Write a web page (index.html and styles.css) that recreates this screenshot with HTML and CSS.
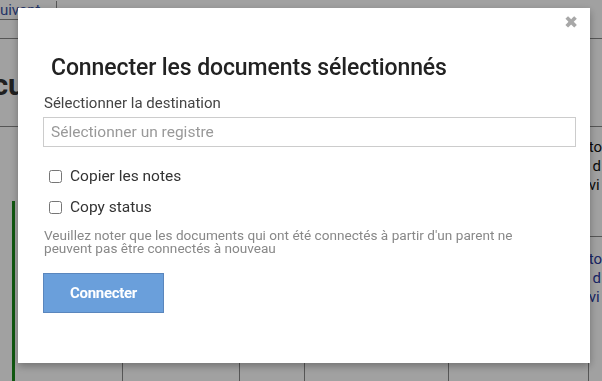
FILE: index.html
```html
<!DOCTYPE html>
<html lang="fr">
<head>
  <meta charset="UTF-8" />
  <title>Connecter les documents</title>
  <link rel="stylesheet" href="styles.css">
</head>
<body>
  <!-- page behind the modal -->
  <div class="page">
    <div class="toolbar">
      <button class="btn-next">Suivant</button>
    </div>
    <h1 class="page-title">Documents</h1>
    <div class="grid">
      <div class="col c1"></div>
      <div class="col c2"></div>
      <div class="col c3"></div>
      <div class="col c4"></div>
      <div class="col c5"></div>
      <div class="col c6">
        <div class="cell-text">to<br>&nbsp;d<br>vi</div>
        <div class="cell-text link">to<br>&nbsp;d<br>vi</div>
      </div>
    </div>
  </div>

  <!-- Modal -->
  <div class="overlay">
    <div class="modal">
      <span class="close">&#10006;</span>
      <h2 class="modal-title">Connecter les documents sélectionnés</h2>
      <label class="field-label">Sélectionner la destination</label>
      <input class="field-input" type="text" placeholder="Sélectionner un registre">
      <div class="options">
        <label class="check"><input type="checkbox"> Copier les notes</label>
        <label class="check"><input type="checkbox"> Copy status</label>
      </div>
      <p class="note">Veuillez noter que les documents qui ont été connectés à partir d'un parent ne peuvent pas être connectés à nouveau</p>
      <button class="btn-connect">Connecter</button>
    </div>
  </div>
</body>
</html>
```

FILE: styles.css
```css
body {
  margin: 0;
  font-family: Roboto, 'Liberation Sans', sans-serif;
  background: #fff;
  overflow: hidden;
  height: 381px;
}

/* Background page */
.page {
  height: 381px;
}

.toolbar {
  height: 38px;
  border-bottom: 1px solid #888;
}

.btn-next {
  margin: 0 0 0 -26px;
  height: 19px;
  padding: 0 16px;
  font-family: Roboto, sans-serif;
  font-size: 15px;
  color: #3a55a5;
  background: #fff;
  border: 1px solid #888;
  border-top: none;
  line-height: 16px;
}

.page-title {
  margin: 0 0 0 -44px;
  height: 88px;
  box-sizing: border-box;
  padding-top: 28px;
  font-size: 30px;
  font-weight: 700;
  color: #333;
  border-bottom: 1px solid #888;
}

.grid {
  display: flex;
  height: 260px;
}

.col {
  border-right: 1px solid #888;
}

.c1 { width: 122px; position: relative; }
.c1::before {
  content: "";
  position: absolute;
  left: 12px;
  top: 74px;
  bottom: 0;
  width: 3px;
  background: #1a8a1a;
}
.c2 { width: 117px; }
.c3 { width: 64px; }
.c4 { width: 144px; }
.c5 { width: 139px; }
.c6 { flex: 1; border-right: none; }

.cell-text {
  font-size: 15px;
  line-height: 19px;
  color: #111;
  padding-top: 11px;
  height: 110px;
  box-sizing: border-box;
  border-bottom: 1px solid #888;
}

.cell-text.link {
  color: #2a3aa0;
  border-bottom: none;
  padding-top: 13px;
}

/* Modal */
.overlay {
  position: fixed;
  inset: 0;
  background: rgba(0, 0, 0, 0.37);
}

.modal {
  position: absolute;
  left: 18px;
  top: 8px;
  width: 572px;
  height: 355px;
  box-sizing: border-box;
  background: #fff;
  padding: 45px 13px 0 26px;
  box-shadow: 0 3px 8px rgba(0, 0, 0, 0.3);
}

.close {
  position: absolute;
  right: 12px;
  top: 4px;
  font-size: 17px;
  color: #a8a8a8;
}

.modal-title {
  margin: 0 0 11px 7px;
  font-size: 23px;
  font-weight: 500;
  color: #222;
  line-height: 30px;
  letter-spacing: -0.1px;
}

.field-label {
  display: block;
  font-size: 15px;
  color: #444;
  line-height: 18px;
  margin-bottom: 5px;
}

.field-input {
  display: block;
  width: 100%;
  height: 30px;
  box-sizing: border-box;
  margin-left: -1px;
  border: 1px solid #ccc;
  padding: 0 7px;
  font-family: Roboto, sans-serif;
  font-size: 15.5px;
  color: #333;
}

.field-input::placeholder {
  color: #999;
}

.options {
  display: flex;
  flex-direction: column;
  gap: 13px;
  margin-top: 20px;
  padding-left: 5px;
}

.check {
  display: flex;
  align-items: center;
  gap: 8px;
  font-size: 15.5px;
  color: #333;
  line-height: 18px;
}

.check input {
  margin: 0;
  width: 13px;
  height: 13px;
}

.note {
  margin: 13px 0 0;
  max-width: 505px;
  font-size: 13.6px;
  line-height: 13px;
  color: #888;
}

.btn-connect {
  margin-top: 18px;
  margin-left: -1px;
  width: 121px;
  height: 40px;
  background: #6a9fdb;
  border: 1px solid #5a86bd;
  color: #fff;
  font-family: Roboto, sans-serif;
  font-size: 15px;
  font-weight: 700;
  letter-spacing: -0.3px;
}
```
